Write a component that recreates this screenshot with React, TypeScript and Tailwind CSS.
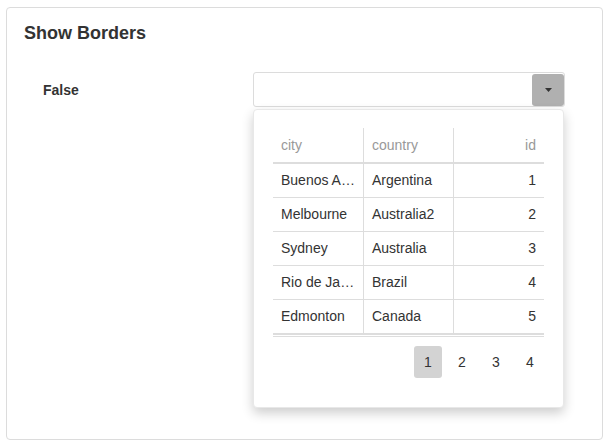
import React from "react"

const rows = [
    { city: "Buenos Aires", country: "Argentina", id: 1 },
    { city: "Melbourne", country: "Australia2", id: 2 },
    { city: "Sydney", country: "Australia", id: 3 },
    { city: "Rio de Janeiro", country: "Brazil", id: 4 },
    { city: "Edmonton", country: "Canada", id: 5 },
]

const pages = [1, 2, 3, 4]

function Caret() {
    return (
        <svg width="7" height="4" viewBox="0 0 7 4">
            <path d="M0 0h7L3.5 4z" fill="#333" />
        </svg>
    )
}

function DropdownGrid() {
    return (
        <div className="absolute left-0 top-[37px] w-[311px] h-[299px] bg-white border border-[#e8e8e8] rounded-[4px] shadow-[0_5px_12px_rgba(0,0,0,0.2)] pt-[18px] px-[19px]">
            <div className="text-[14px]">
                <div className="grid grid-cols-[91px_90px_90px] h-[36px] border-b-2 border-[#dddddd] text-[#999]">
                    <div className="flex items-center px-2 border-r border-[#dddddd]">city</div>
                    <div className="flex items-center px-2 border-r border-[#dddddd]">country</div>
                    <div className="flex items-center justify-end px-2">id</div>
                </div>
                {rows.map((row, i) => (
                    <div
                        key={row.id}
                        className={
                            i === rows.length - 1
                                ? "grid grid-cols-[91px_90px_90px] h-[35px] border-b-2 border-[#dddddd] text-[#333]"
                                : "grid grid-cols-[91px_90px_90px] h-[34px] border-b border-[#dddddd] text-[#333]"
                        }
                    >
                        <div className="flex items-center px-2 border-r border-[#dddddd] min-w-0">
                            <span className="truncate">{row.city}</span>
                        </div>
                        <div className="flex items-center px-2 border-r border-[#dddddd]">{row.country}</div>
                        <div className="flex items-center justify-end px-2">{row.id}</div>
                    </div>
                ))}
            </div>
            <div className="mt-px border-t border-[#dddddd] pt-[9px] flex justify-end gap-[6px] text-[14px] text-[#333]">
                {pages.map((p) => (
                    <div
                        key={p}
                        className={
                            p === 1
                                ? "w-[28px] h-[32px] flex items-center justify-center rounded-[3px] bg-[#d3d3d3]"
                                : "w-[28px] h-[32px] flex items-center justify-center rounded-[3px]"
                        }
                    >
                        {p}
                    </div>
                ))}
            </div>
        </div>
    )
}

export default function App() {
    return (
        <div className="min-h-screen bg-white pt-[7px] pl-[6px] font-['Liberation_Sans',Arial,sans-serif] text-[#333]">
            <div className="w-[597px] h-[433px] border border-[#dcdcdc] rounded-[4px] px-[17px] pt-[15px]">
                <h2 className="text-[18px] leading-[21px] font-bold">Show Borders</h2>

                <div className="flex mt-[28px]">
                    <div className="w-[229px] h-[35px] pl-[19px] flex items-center text-[14px] leading-[16px] font-bold">
                        False
                    </div>
                    <div className="relative w-[312px]">
                        <div className="h-[35px] border border-[#dcdcdc] rounded-[3px] flex items-center justify-end">
                            <button className="w-[32px] h-[32px] mt-px bg-[#b0b0b0] rounded-[3px] flex items-center justify-center">
                                <Caret />
                            </button>
                        </div>
                        <DropdownGrid />
                    </div>
                </div>
            </div>
        </div>
    )
}
